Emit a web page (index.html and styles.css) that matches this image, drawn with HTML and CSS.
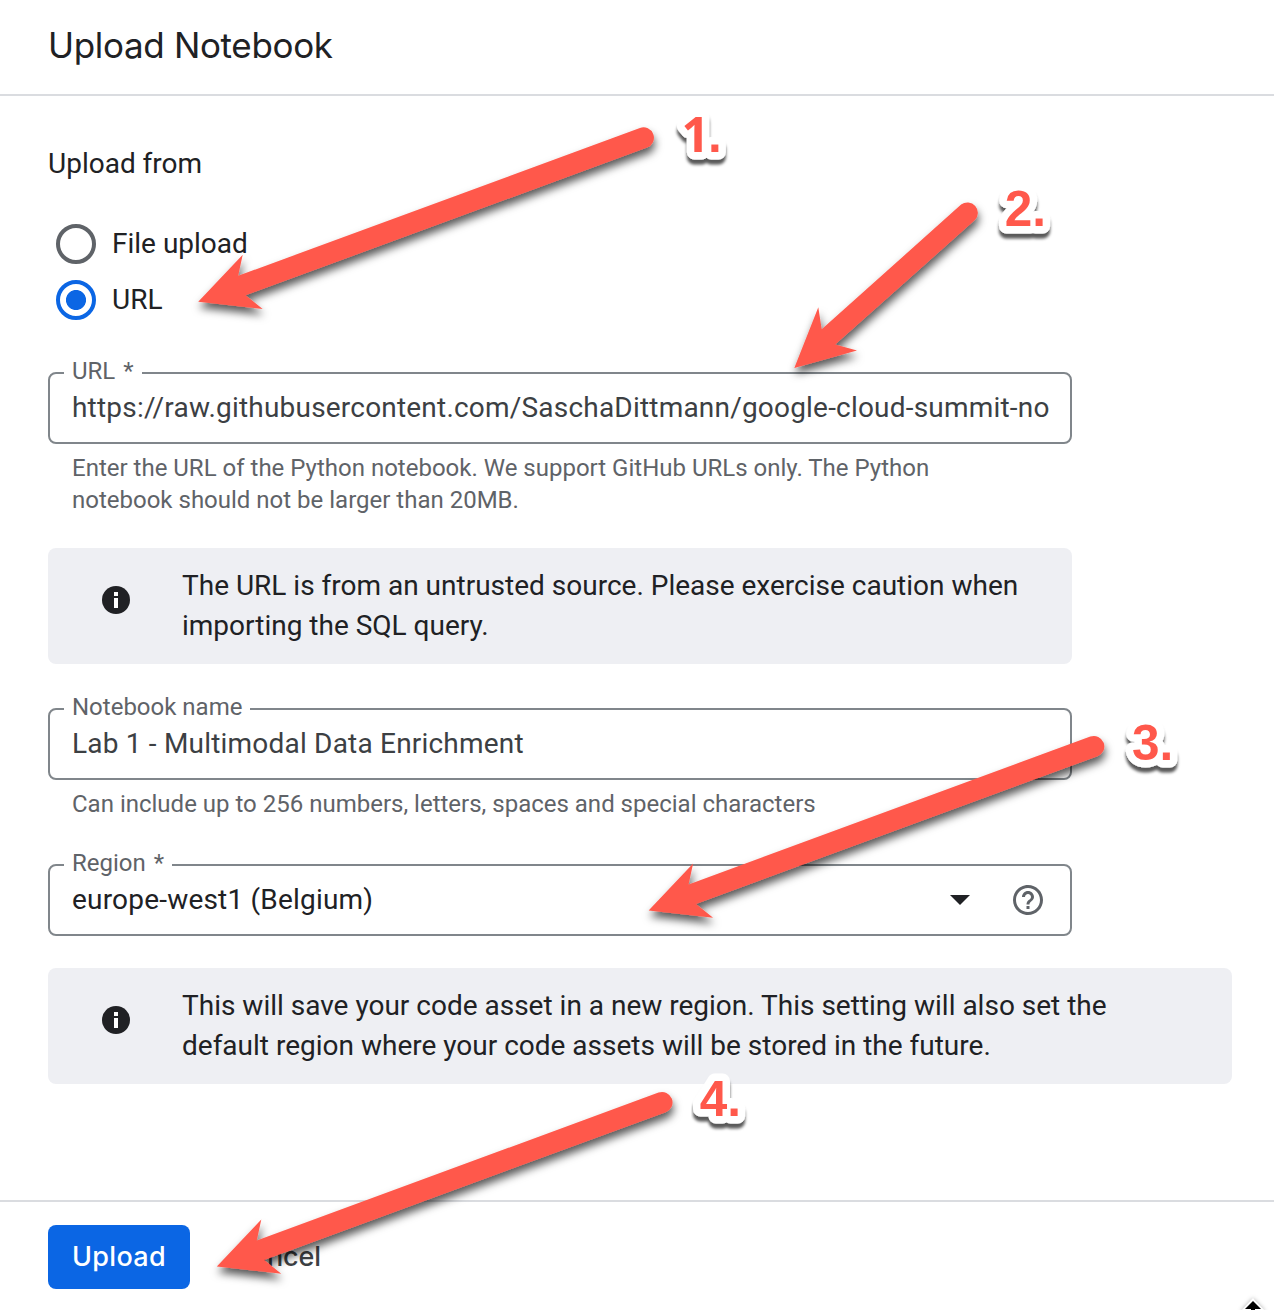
FILE: index.html
```html
<!DOCTYPE html>
<html lang="en">
<head>
<meta charset="utf-8">
<title>Upload Notebook</title>
<link rel="stylesheet" href="styles.css">
</head>
<body>
<div class="panel">
  <header class="header"><h1 class="title">Upload Notebook</h1></header>
  <main class="content">
    <div class="group-label">Upload from</div>
    <div class="radios">
      <div class="radio"><span class="ring"></span><span class="radio-text">File upload</span></div>
      <div class="radio"><span class="ring checked"></span><span class="radio-text">URL</span></div>
    </div>

    <div class="field url-field">
      <span class="label">URL <span class="star">*</span></span>
      <span class="value">https://raw.githubusercontent.com/SaschaDittmann/google-cloud-summit-no</span>
    </div>
    <div class="hint">Enter the URL of the Python notebook. We support GitHub URLs only. The Python<br>notebook should not be larger than 20MB.</div>

    <div class="notice notice-narrow">
      <svg class="info" viewBox="0 0 28 28"><circle cx="14" cy="14" r="14" fill="#202124"/><path d="M12 6h4v4h-4zM12 12h4v10h-4z" fill="#fff"/></svg>
      <p class="notice-text">The URL is from an untrusted source. Please exercise caution when<br>importing the SQL query.</p>
    </div>

    <div class="field name-field">
      <span class="label">Notebook name</span>
      <span class="value">Lab 1 - Multimodal Data Enrichment</span>
    </div>
    <div class="hint">Can include up to 256 numbers, letters, spaces and special characters</div>

    <div class="field region-field">
      <span class="label">Region <span class="star">*</span></span>
      <span class="value value-dark">europe-west1 (Belgium)</span>
      <svg class="caret" viewBox="0 0 20 10"><path d="M0 0h20L10 10z" fill="#202124"/></svg>
      <svg class="help" viewBox="0 0 24 24"><path fill="#5f6368" d="M11 18h2v-2h-2v2zm1-16C6.48 2 2 6.48 2 12s4.48 10 10 10 10-4.48 10-10S17.52 2 12 2zm0 18c-4.41 0-8-3.59-8-8s3.59-8 8-8 8 3.59 8 8-3.59 8-8 8zm0-14c-2.21 0-4 1.79-4 4h2c0-1.1.9-2 2-2s2 .9 2 2c0 2-3 1.75-3 5h2c0-2.25 3-2.5 3-5 0-2.21-1.79-4-4-4z"/></svg>
    </div>

    <div class="notice notice-wide">
      <svg class="info" viewBox="0 0 28 28"><circle cx="14" cy="14" r="14" fill="#202124"/><path d="M12 6h4v4h-4zM12 12h4v10h-4z" fill="#fff"/></svg>
      <p class="notice-text">This will save your code asset in a new region. This setting will also set the<br>default region where your code assets will be stored in the future.</p>
    </div>
  </main>
  <footer class="footer">
    <button class="btn primary">Upload</button>
    <button class="btn text">Cancel</button>
  </footer>

  <svg class="annotations" viewBox="0 0 1274 1310">
    <defs>
      <filter id="arrow-shadow" x="-10%" y="-10%" width="120%" height="130%">
        <feDropShadow dx="1" dy="6" stdDeviation="4" flood-color="#000" flood-opacity=".65"/>
      </filter>
      <filter id="num-shadow" x="-20%" y="-20%" width="140%" height="150%">
        <feDropShadow dx="0" dy="5" stdDeviation="1.8" flood-color="#000" flood-opacity=".65"/>
      </filter>
      <path id="arrow" d="M0 0L44.5-47L40-26L441.7-173.8A10.4 10.4 0 0 1 448.9-154.2L47.4-6.5L64.5 7.3Z"/>
    </defs>
    <g class="arrows">
      <use href="#arrow" x="198.2" y="301.8" filter="url(#arrow-shadow)"/>
      <path filter="url(#arrow-shadow)" d="M794.3 368L818.3 307.3L821.7 329.3L961.1 204.6A10.4 10.4 0 0 1 974.9 220.1L835.2 344.5L857 350.6Z"/>
      <use href="#arrow" x="648.6" y="910.4" filter="url(#arrow-shadow)"/>
      <use href="#arrow" x="216.8" y="1266.4" filter="url(#arrow-shadow)"/>
    </g>
    <g class="numbers">
      <text x="681.5" y="152.3" filter="url(#num-shadow)"><tspan class="one">1</tspan><tspan x="708">.</tspan></text>
      <text x="1004.8" y="226.3" filter="url(#num-shadow)">2.</text>
      <text x="1131.9" y="760.3" filter="url(#num-shadow)">3.</text>
      <text x="699.7" y="1116.3" filter="url(#num-shadow)">4.</text>
    </g>
    <g class="cursor">
      <path class="cursor-halo" d="M1253 1301L1261 1309.5H1255V1314H1251V1309.5H1245Z"/>
      <path d="M1253 1301L1261 1309H1255V1314H1251V1309H1245Z"/>
    </g>
  </svg>
</div>
</body>
</html>
```
FILE: styles.css
```css
* { box-sizing: border-box; }

body {
  margin: 0;
  background: #fff;
  color: #202124;
  font-family: Roboto, "Liberation Sans", sans-serif;
  font-size: 28px;
}

.panel {
  position: relative;
  width: 1274px;
  height: 1310px;
  overflow: hidden;
  display: flex;
  flex-direction: column;
}

.header {
  height: 96px;
  padding: 0 48px;
  border-bottom: 2px solid #dadce0;
  display: flex;
  align-items: center;
}

.title {
  margin: 0 0 4px;
  font: 400 35px/44px Inter, Roboto, sans-serif;
  letter-spacing: -0.33px;
}

.content {
  height: 1104px;
  padding: 48px 42px 0 48px;
  display: flex;
  flex-direction: column;
}

.group-label { line-height: 40px; }

.radios {
  margin: 40px 0 0 8px;
  display: flex;
  flex-direction: column;
  gap: 16px;
}

.radio {
  display: flex;
  align-items: center;
  gap: 16px;
  height: 40px;
}

.radio-text { line-height: 40px; }

.ring {
  width: 40px;
  height: 40px;
  border: 4px solid #5f6368;
  border-radius: 50%;
}

.ring.checked {
  border-color: #0b66e4;
  background: radial-gradient(circle, #0b66e4 9.6px, transparent 10.4px);
}

.field {
  position: relative;
  width: 1024px;
  height: 72px;
  flex: none;
  border: 2px solid #80868b;
  border-radius: 8px;
  padding: 0 22px;
  display: flex;
  align-items: center;
}

.url-field { margin-top: 52px; }
.name-field { margin-top: 44px; }
.region-field { margin-top: 44px; }

.label {
  position: absolute;
  left: 14px;
  top: -19px;
  padding: 0 8px;
  background: #fff;
  color: #5f6368;
  font-size: 24px;
  line-height: 32px;
}

.star { margin-left: 2px; }

.value {
  flex: 1;
  color: #3c4043;
  line-height: 40px;
  letter-spacing: .2px;
  white-space: nowrap;
}

.value-dark { color: #202124; }

.caret { width: 20px; height: 10px; }
.help { width: 36px; height: 36px; margin: 0 2px 0 40px; }

.hint {
  margin: 8px 0 0 24px;
  color: #5f6368;
  font-size: 24px;
  line-height: 32px;
}

.notice {
  flex: none;
  height: 116px;
  margin-top: 32px;
  padding: 18px 0 18px 54px;
  border-radius: 8px;
  background: #eeeff3;
  display: flex;
  gap: 52px;
}

.notice-narrow { width: 1024px; }
.notice-wide { width: 1184px; }

.info { width: 28px; height: 28px; margin-top: 20px; flex: none; }

.notice-text { margin: 0; line-height: 40px; white-space: nowrap; }

.footer {
  height: 110px;
  padding: 23px 48px 0;
  border-top: 2px solid #dadce0;
  display: flex;
  align-items: flex-start;
  gap: 16px;
}

.btn {
  height: 64px;
  padding: 0;
  border: 0;
  border-radius: 8px;
  font: 500 27px/64px Inter, Roboto, sans-serif;
}

.primary { width: 142px; background: #0b66e4; color: #fff; letter-spacing: .3px; }
.text { width: 138px; padding-left: 3px; background: transparent; color: #3c4043; letter-spacing: -.1px; }

.annotations {
  position: absolute;
  left: 0;
  top: 0;
  width: 1274px;
  height: 1310px;
}

.arrows { fill: #ff594c; }

.numbers {
  font: 700 49.5px "Liberation Sans", sans-serif;
  fill: #ff594c;
  stroke: #fff;
  stroke-width: 15px;
  stroke-linejoin: round;
  paint-order: stroke;
}

.one { font: 700 49px "Open Sans", sans-serif; }

.cursor-halo {
  fill: #fff;
  stroke: #fff;
  stroke-width: 4px;
  filter: drop-shadow(0 0 2px rgba(0, 0, 0, .3));
}
```
